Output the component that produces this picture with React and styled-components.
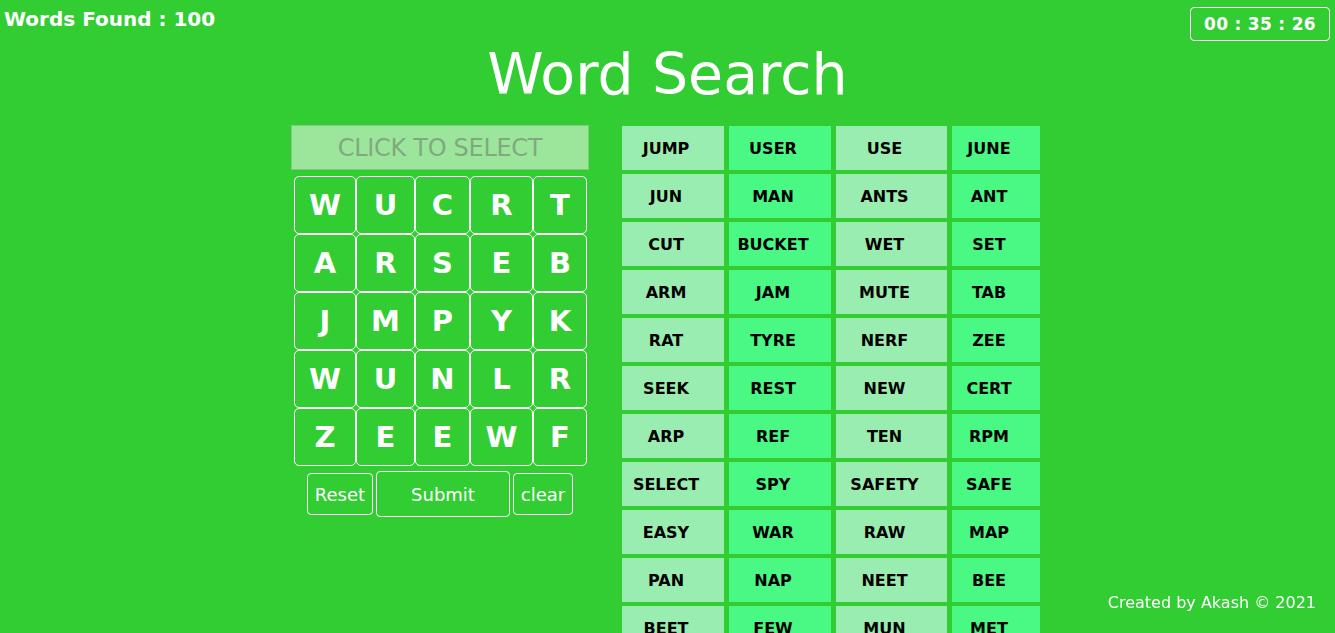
/* Libraries */
import React from 'react';
import styled, {createGlobalStyle} from 'styled-components';

const GlobalStyle = createGlobalStyle`
  body {
    margin: 0;
    background: #32cd32;
    font-family: "DejaVu Sans", Verdana, sans-serif;
    color: white;
  }
`;

const letters = [
  ['W', 'U', 'C', 'R', 'T'],
  ['A', 'R', 'S', 'E', 'B'],
  ['J', 'M', 'P', 'Y', 'K'],
  ['W', 'U', 'N', 'L', 'R'],
  ['Z', 'E', 'E', 'W', 'F'],
];

const words = [
  ['JUMP', 'USER', 'USE', 'JUNE'],
  ['JUN', 'MAN', 'ANTS', 'ANT'],
  ['CUT', 'BUCKET', 'WET', 'SET'],
  ['ARM', 'JAM', 'MUTE', 'TAB'],
  ['RAT', 'TYRE', 'NERF', 'ZEE'],
  ['SEEK', 'REST', 'NEW', 'CERT'],
  ['ARP', 'REF', 'TEN', 'RPM'],
  ['SELECT', 'SPY', 'SAFETY', 'SAFE'],
  ['EASY', 'WAR', 'RAW', 'MAP'],
  ['PAN', 'NAP', 'NEET', 'BEE'],
  ['BEET', 'FEW', 'MUN', 'MET'],
  ['TEN', 'NET', 'TYRE', 'RYE'],
];

const Page = styled.div`
  /* Display & Box Model */
  display: flex;
  flex-direction: column;
`;

const Header = styled.div`
  /* Display & Box Model */
  display: flex;
  justify-content: space-between;
  align-items: flex-start;
  height: 44px;
`;

const WordsFound = styled.div`
  /* Display & Box Model */
  padding: 7px 0 0 4px;
  /* Text */
  font-size: 20px;
  font-weight: bold;
`;

const Timer = styled.div`
  /* Display & Box Model */
  margin: 7px 5px 0 0;
  width: 138px;
  height: 32px;
  display: flex;
  align-items: center;
  justify-content: center;
  border: 1px solid white;
  border-radius: 4px;
  /* Text */
  font-size: 17px;
  font-weight: bold;
  letter-spacing: 0.3px;
`;

const Title = styled.h1`
  /* Display & Box Model */
  margin: -5px 0 16px;
  /* Text */
  font-size: 57px;
  font-weight: normal;
  text-align: center;
  line-height: 70px;
`;

const Main = styled.div`
  /* Display & Box Model */
  display: flex;
  justify-content: center;
  align-items: flex-start;
  gap: 33px;
  padding-right: 4px;
`;

const Panel = styled.div`
  /* Display & Box Model */
  width: 298px;
  display: flex;
  flex-direction: column;
  align-items: center;
`;

const SelectBox = styled.div`
  /* Display & Box Model */
  width: 296px;
  height: 43px;
  display: flex;
  align-items: center;
  justify-content: center;
  border: 1px solid #82c982;
  /* Style */
  background: #9ce69c;
  color: #80a980;
  /* Text */
  font-size: 24px;
  letter-spacing: -0.3px;
`;

const LetterGrid = styled.div`
  /* Display & Box Model */
  margin-top: 6px;
  display: grid;
  grid-template-columns: 62px 59px 55px 63px 54px;
  grid-auto-rows: 58px;
  margin-left: 1px;
`;

const Letter = styled.div`
  /* Display & Box Model */
  display: flex;
  align-items: center;
  justify-content: center;
  border: 1px solid white;
  border-radius: 5px;
  /* Text */
  font-size: 29px;
  font-weight: bold;
`;

const Buttons = styled.div`
  /* Display & Box Model */
  margin-top: 5px;
  display: flex;
  align-items: center;
  gap: 3px;
`;

const Button = styled.button`
  /* Display & Box Model */
  width: ${props => props.w}px;
  height: ${props => props.h || 42}px;
  padding: 0;
  border: 1px solid white;
  border-radius: 4px;
  /* Style */
  background: transparent;
  color: white;
  /* Text */
  font-family: "DejaVu Sans", Verdana, sans-serif;
  font-size: 18px;
`;

const WordTable = styled.div`
  /* Display & Box Model */
  margin-top: 1px;
  display: grid;
  grid-template-columns: 102px 102px 111px 88px;
  grid-auto-rows: 44px;
  gap: 4px 5px;
`;

const Word = styled.div`
  /* Display & Box Model */
  display: flex;
  align-items: center;
  justify-content: center;
  padding-right: 14px;
  /* Style */
  background: ${props => (props.light ? '#9aedb0' : '#4af984')};
  color: black;
  /* Text */
  font-size: 16px;
  font-weight: bold;
`;

const Footer = styled.div`
  /* Positioning */
  position: fixed;
  right: 19px;
  bottom: 21px;
  /* Text */
  font-family: "Comic Sans MS", "DejaVu Sans", sans-serif;
  font-size: 16px;
`;

const App = () =>
  <Page>
    <GlobalStyle/>
    <Header>
      <WordsFound>Words Found : 100</WordsFound>
      <Timer>00 : 35 : 26</Timer>
    </Header>
    <Title>Word Search</Title>
    <Main>
      <Panel>
        <SelectBox>CLICK TO SELECT</SelectBox>
        <LetterGrid>
          {letters.flat().map((l, i) => <Letter key={i}>{l}</Letter>)}
        </LetterGrid>
        <Buttons>
          <Button w={66}>Reset</Button>
          <Button w={134} h={46}>Submit</Button>
          <Button w={60}>clear</Button>
        </Buttons>
      </Panel>
      <WordTable>
        {words.flat().map((w, i) => <Word key={i} light={i % 2 === 0}>{w}</Word>)}
      </WordTable>
    </Main>
    <Footer>Created by Akash © 2021</Footer>
  </Page>

export default App;
